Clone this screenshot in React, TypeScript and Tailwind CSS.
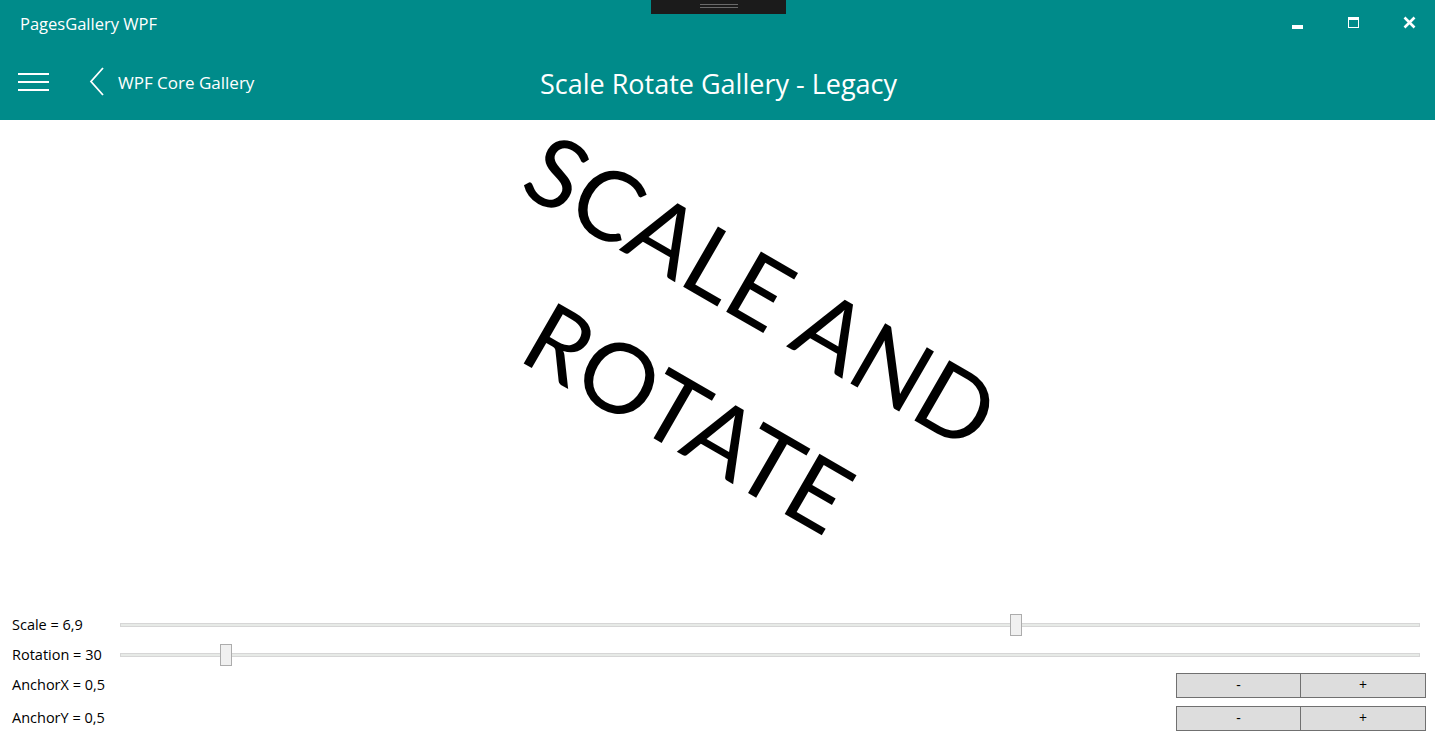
import React from "react";

const ui = { fontFamily: '"Open Sans", "Noto Sans", "Liberation Sans", sans-serif' };

function Slider({ pct }: { pct: number }) {
  return (
    <div className="relative flex-1 h-[22px] flex items-center">
      <div className="w-full h-[4px] bg-[#e7eae7] border border-[#d6d6d6]" />
      <div
        className="absolute top-0 w-[12px] h-[22px] bg-[#f0f0f0] border border-[#acacac]"
        style={{ left: `calc(${pct}% - ${pct * 0.12}px)` }}
      />
    </div>
  );
}

function Row({ label, children }: { label: string; children?: React.ReactNode }) {
  return (
    <div className="flex items-center h-[30px]">
      <div className="w-[108px] text-[14.5px] text-black leading-none" style={ui}>
        {label}
      </div>
      {children}
    </div>
  );
}

function Btns() {
  return (
    <div className="ml-auto flex">
      <button className="w-[125px] h-[25px] bg-[#dddddd] border border-[#707070] text-[14px] text-black leading-none" style={ui}>-</button>
      <button className="w-[125px] h-[25px] bg-[#dddddd] border border-[#707070] border-l-0 text-[14px] text-black leading-none" style={ui}>+</button>
    </div>
  );
}

export default function App() {
  return (
    <div className="w-[1435px] h-[741px] bg-white flex flex-col overflow-hidden relative">
      {/* top bar */}
      <div className="h-[120px] bg-[#008b8a] text-white flex flex-col relative shrink-0">
        <div className="absolute left-[651px] top-0 w-[135px] h-[14px] bg-[#1b1b1b] flex flex-col items-center pt-[4px] gap-[2px]">
          <div className="w-[38px] h-[1px] bg-[#6a6a6a]" />
          <div className="w-[38px] h-[1px] bg-[#6a6a6a]" />
        </div>
        <div className="h-[48px] flex items-center pl-[20px]">
          <span className="text-[16.5px] leading-none" style={ui}>PagesGallery WPF</span>
          <div className="ml-auto flex items-center h-full">
            <div className="w-[56px] h-full flex items-center justify-center">
              <div className="w-[11px] h-[4px] bg-white mt-[5px]" />
            </div>
            <div className="w-[56px] h-full flex items-center justify-center">
              <div className="w-[11px] h-[11px] border border-white border-t-[3px] mb-[4px]" />
            </div>
            <div className="w-[56px] h-full flex items-center justify-center mr-[-2px]">
              <svg width="13" height="13" viewBox="0 0 13 13" className="mb-[4px]">
                <path d="M1.5 1.5 L11.5 11.5 M11.5 1.5 L1.5 11.5" stroke="white" strokeWidth="2.6" />
              </svg>
            </div>
          </div>
        </div>
        <div className="flex-1 flex items-center relative">
          <div className="ml-[18px] flex flex-col gap-[6px] w-[31px] mt-[-4px]">
            <div className="h-[2px] bg-white" />
            <div className="h-[2px] bg-white" />
            <div className="h-[2px] bg-white" />
          </div>
          <svg width="16" height="30" viewBox="0 0 16 30" className="ml-[40px] mt-[-4px]">
            <path d="M14 1 L2 14.5 L14 28" stroke="white" strokeWidth="1.8" fill="none" />
          </svg>
          <span className="ml-[13px] text-[17px] leading-none mt-[-4px]" style={ui}>WPF Core Gallery</span>
          <div className="absolute inset-0 flex items-center justify-center pl-[2px]">
            <span className="text-[27px] leading-none mt-[-2px]" style={ui}>Scale Rotate Gallery - Legacy</span>
          </div>
        </div>
      </div>

      {/* canvas */}
      <div className="flex-1 relative">
        <div
          className="absolute left-[731px] top-[236px] text-black text-center whitespace-nowrap font-normal"
          style={{
            fontFamily: 'Lato, "Open Sans", sans-serif',
            fontSize: "97px",
            lineHeight: "146px",
            transform: "translate(-50%, -50%) rotate(30deg)",
          }}
        >
          <div className="pr-[12px]">SCALE AND</div>
          <div className="pr-[12px]">ROTATE</div>
        </div>
      </div>

      {/* controls */}
      <div className="shrink-0 flex flex-col pl-[12px] pr-[9px] pb-[8px]">
        <Row label="Scale = 6,9">
          <div className="flex-1 pr-[6px] flex"><Slider pct={69.1} /></div>
        </Row>
        <Row label="Rotation = 30">
          <div className="flex-1 pr-[6px] flex"><Slider pct={7.8} /></div>
        </Row>
        <Row label="AnchorX = 0,5"><Btns /></Row>
        <div className="h-[3px]" />
        <Row label="AnchorY = 0,5"><Btns /></Row>
      </div>
    </div>
  );
}
